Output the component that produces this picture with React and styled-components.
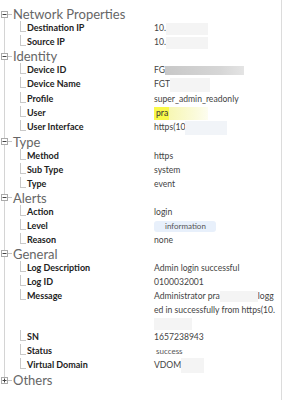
import React from 'react';
import styled, { createGlobalStyle } from 'styled-components';

const GlobalStyle = createGlobalStyle`
  html, body {
    margin: 0;
    padding: 0;
    background: #fff;
  }
  body {
    font-family: Lato, "Noto Sans", sans-serif;
  }
`;

const Panel = styled.div`
  width: 282px;
  height: 400px;
  box-sizing: border-box;
  border-right: 1px solid #dcdcdc;
  padding-top: 7px;
  overflow: hidden;
`;

const Tree = styled.ul`
  position: relative;
  list-style: none;
  margin: 0;
  padding: 0;

  &::before {
    content: '';
    position: absolute;
    left: 4px;
    top: 10px;
    bottom: 10px;
    border-left: 1px solid #d4d4d4;
  }
`;

const Group = styled.li`
  position: relative;
`;

const GroupHeader = styled.div`
  display: flex;
  align-items: center;
  height: 14px;
  font-size: 13px;
  color: #666;

  .dash {
    width: 4px;
    border-top: 1px solid #c4c4c4;
    margin-right: 1px;
  }
`;

const BoxIcon = styled.svg`
  margin-left: 1px;
  flex: none;
  background: #fff;
`;

const Children = styled.div`
  display: flex;
  flex-direction: column;
`;

const Row = styled.div`
  position: relative;
  display: grid;
  grid-template-columns: 127px 1fr;
  padding-left: 27px;
  padding-right: 3px;
  line-height: 14px;

  &::before {
    content: '';
    position: absolute;
    left: 20px;
    top: 0;
    width: 5px;
    height: 10px;
    border-left: 1px solid #c8c8c8;
    border-bottom: 1px solid #c8c8c8;
  }
`;

const Label = styled.span`
  font-size: 9px;
  font-weight: 700;
  color: #222;
  white-space: nowrap;
`;

const Value = styled.span`
  font-size: 8.6px;
  color: #444;
  word-break: break-all;
`;

const Blur = styled.span`
  display: ${({ $block }) => ($block ? 'block' : 'inline-block')};
  width: ${({ $w }) => $w}px;
  height: ${({ $h }) => $h || 12}px;
  margin-top: ${({ $block }) => ($block ? '1px' : '0')};
  vertical-align: middle;
  background: ${({ $bg }) => $bg || '#f4f4f4'};
  filter: blur(0.6px);
`;

const Highlight = styled.span`
  background: #f9f94a;
  padding: 1px 1px 2px 2px;
  color: #333;
`;

const Badge = styled.span`
  display: inline-block;
  line-height: 11px;
  padding: 0 10px;
  border-radius: 3px;
  font-size: 8px;
  color: #555;
  background: ${({ $bg }) => $bg || 'transparent'};
  padding-left: ${({ $bg }) => ($bg ? '11px' : '2px')};
`;

const Box = ({ open }) => (
  <BoxIcon width="7" height="7" viewBox="0 0 7 7">
    <rect x="0.5" y="0.5" width="6" height="6" fill="#fff" stroke="#aaa" />
    <line x1="1.5" y1="3.5" x2="5.5" y2="3.5" stroke="#444" />
    {!open && <line x1="3.5" y1="1.5" x2="3.5" y2="5.5" stroke="#444" />}
  </BoxIcon>
);

const groups = [
  {
    title: 'Network Properties',
    rows: [
      { label: 'Destination IP', value: <>10.<Blur $w={42} /></> },
      { label: 'Source IP', value: <>10.<Blur $w={42} /></> },
    ],
  },
  {
    title: 'Identity',
    rows: [
      {
        label: 'Device ID',
        value: (
          <>
            FG
            <Blur $w={79} $h={9} $bg="linear-gradient(90deg, #c8c8c8, #d6d6d6 70%, #e4e4e4)" />
          </>
        ),
      },
      { label: 'Device Name', value: <>FGT<Blur $w={40} $h={14} /></> },
      { label: 'Profile', value: 'super_admin_readonly' },
      {
        label: 'User',
        value: (
          <>
            <Highlight>pra</Highlight>
            <Blur $w={39} $h={13} $bg="linear-gradient(90deg, #f7f7b4, #fbfbdc 70%, #fdfdf0)" />
          </>
        ),
      },
      { label: 'User Interface', value: <>https(10<Blur $w={42} $h={14} $bg="#f1f4f8" /></> },
    ],
  },
  {
    title: 'Type',
    rows: [
      { label: 'Method', value: 'https' },
      { label: 'Sub Type', value: 'system' },
      { label: 'Type', value: 'event' },
    ],
  },
  {
    title: 'Alerts',
    rows: [
      { label: 'Action', value: 'login' },
      { label: 'Level', value: <Badge $bg="#e8f0fb">information</Badge> },
      { label: 'Reason', value: 'none' },
    ],
  },
  {
    title: 'General',
    rows: [
      { label: 'Log Description', value: 'Admin login successful' },
      { label: 'Log ID', value: '0100032001' },
      {
        label: 'Message',
        value: (
          <>
            Administrator pra<Blur $w={38} $h={11} />logged in successfully from https(10.
            <Blur $block $w={38} $h={12} />
          </>
        ),
      },
      { label: 'SN', value: '1657238943' },
      { label: 'Status', value: <Badge>success</Badge> },
      { label: 'Virtual Domain', value: <>VDOM<Blur $w={23} $h={15} /></> },
    ],
  },
];

export default function App() {
  return (
    <Panel>
      <GlobalStyle />
      <Tree>
        {groups.map((g) => (
          <Group key={g.title}>
            <GroupHeader>
              <Box open />
              <span className="dash" />
              <span>{g.title}</span>
            </GroupHeader>
            <Children>
              {g.rows.map((r) => (
                <Row key={r.label}>
                  <Label>{r.label}</Label>
                  <Value>{r.value}</Value>
                </Row>
              ))}
            </Children>
          </Group>
        ))}
        <Group>
          <GroupHeader>
            <Box />
            <span className="dash" />
            <span>Others</span>
          </GroupHeader>
        </Group>
      </Tree>
    </Panel>
  );
}
